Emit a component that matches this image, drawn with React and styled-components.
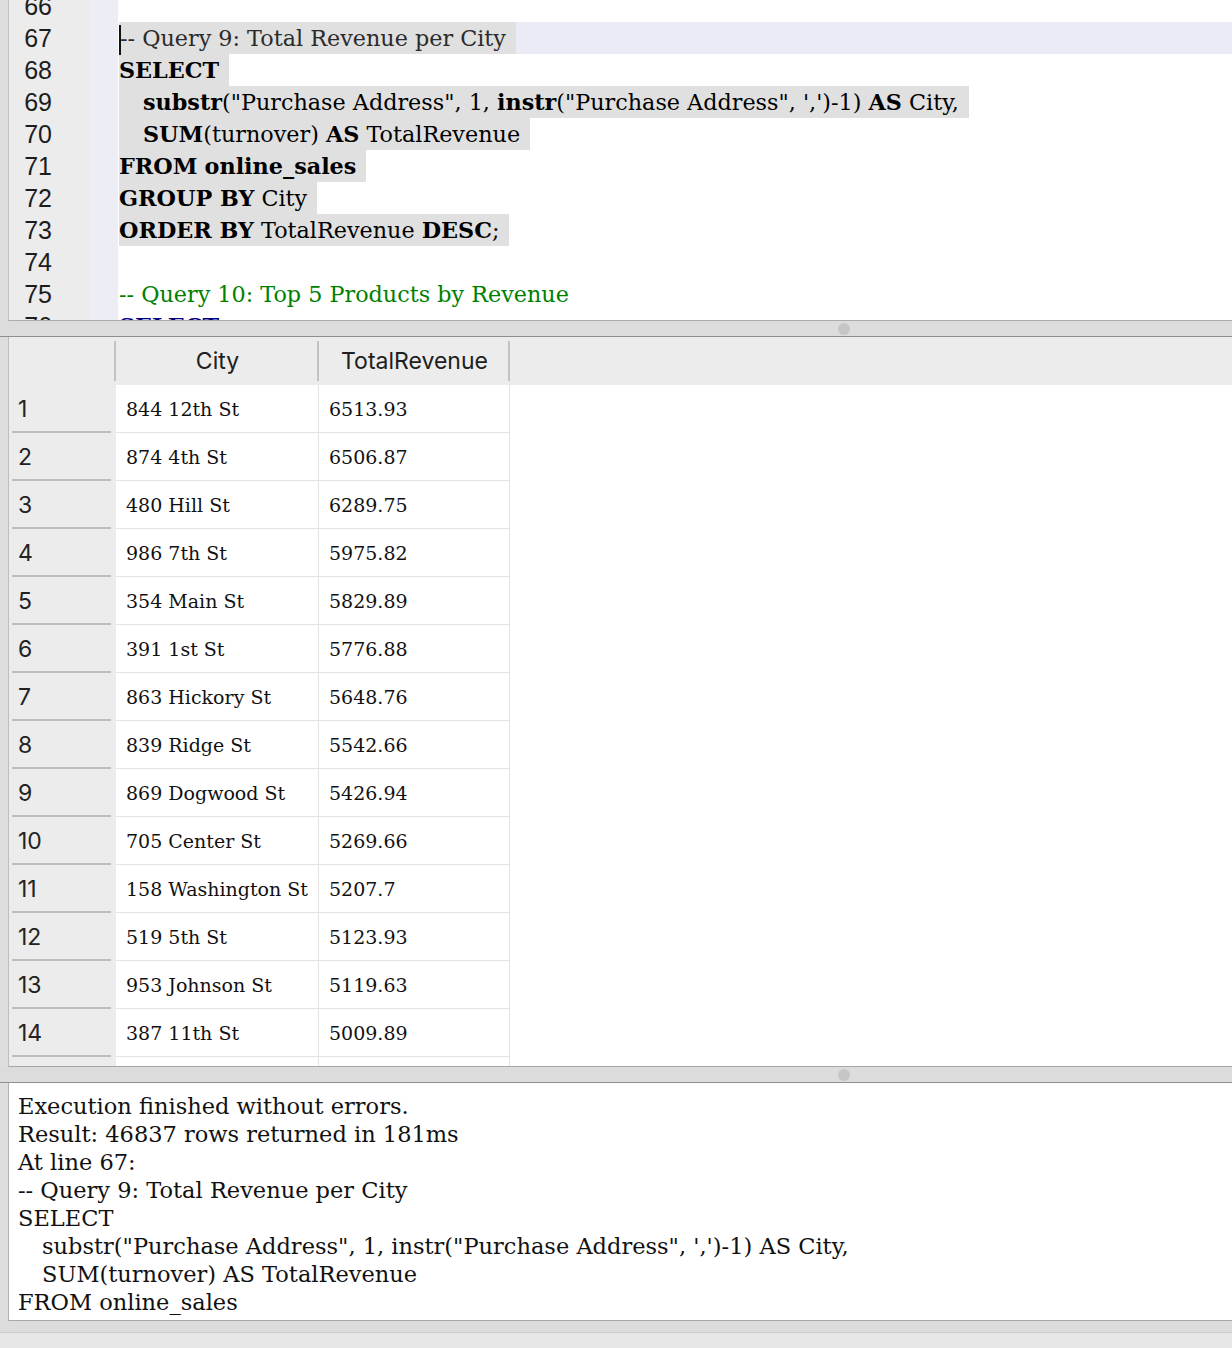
import React from "react";
import styled, { createGlobalStyle } from "styled-components";

const GlobalStyle = createGlobalStyle`
  html, body {
    margin: 0;
    padding: 0;
    background: #dedede;
  }
  * {
    box-sizing: border-box;
  }
`;

const codeFont = `"DejaVu Serif", "Liberation Serif", serif`;
const uiFont = `Inter, "Liberation Sans", sans-serif`;

const Window = styled.div`
  width: 1232px;
  height: 1348px;
  display: flex;
  flex-direction: column;
  overflow: hidden;
  background: #dedede;
`;

/* ---------- editor ---------- */

const EditorPanel = styled.div`
  height: 321px;
  margin-left: 8px;
  display: flex;
  background: #fff;
  border-left: 1px solid #c2c2c2;
  border-bottom: 1px solid #ababab;
  overflow: hidden;
`;

const Gutter = styled.div`
  width: 81px;
  flex: none;
  background: #ececec;
  padding-right: 38px;
  text-align: right;
  font-family: "Liberation Sans", Arial, sans-serif;
  font-size: 25px;
  color: #1c1c1c;
`;

const Scroll = styled.div`
  margin-top: -10px;
`;

const LineNo = styled.div`
  height: 32px;
  line-height: 32px;
`;

const FoldMargin = styled.div`
  width: 28px;
  flex: none;
  background: #ededf6;
`;

const Code = styled.div`
  flex: 1;
  font-family: ${codeFont};
  font-size: 22.3px;
  color: #000;
  padding-left: 1px;
`;

const Line = styled.div`
  height: 32px;
  line-height: 32px;
  white-space: pre;
  background: ${(p) => (p.$current ? "#ebebf5" : "transparent")};
`;

const Selected = styled.span`
  display: inline-block;
  height: 32px;
  padding-right: 10px;
  background: #e0e0e0;
`;

const Indent = styled.span`
  display: inline-block;
  width: 24px;
`;

const Cursor = styled.span`
  position: relative;
  z-index: 1;
  display: inline-block;
  width: 2px;
  height: 30px;
  margin-right: -1px;
  vertical-align: middle;
  background: #111;
`;

const Kw = styled.b`
  font-weight: 700;
  color: ${(p) => (p.$sel ? "#000" : "#00007f")};
`;

const Comment = styled.span`
  color: ${(p) => (p.$sel ? "#2b2b2b" : "#008000")};
`;

/* ---------- splitter ---------- */

const Splitter = styled.div`
  height: 16px;
  flex: none;
  background: #dcdcdc;
  border-bottom: 1px solid #8f8f8f;
  display: flex;
  align-items: center;
  padding-left: 838px;
`;

const Handle = styled.span`
  width: 12px;
  height: 12px;
  border-radius: 50%;
  background: #c6c6c6;
`;

/* ---------- results table ---------- */

const TablePanel = styled.div`
  height: 730px;
  flex: none;
  margin-left: 8px;
  background: #fff;
  border-left: 1px solid #bdbdbd;
  border-bottom: 1px solid #a6a6a6;
  overflow: hidden;
`;

const Row = styled.div`
  display: grid;
  grid-template-columns: 107px 203px 191px 1fr;
  height: 48px;
  background: ${(p) => (p.$header ? "#ececec" : "#fff")};
`;

const HeaderCell = styled.div`
  position: relative;
  display: flex;
  align-items: center;
  justify-content: center;
  font-family: ${uiFont};
  font-size: 23px;
  color: #202020;
  &::after {
    content: "";
    position: absolute;
    right: 0;
    top: 4px;
    bottom: 4px;
    width: 2px;
    background: #c2c2c2;
  }
`;

const RowHead = styled.div`
  position: relative;
  display: flex;
  align-items: center;
  padding-left: 9px;
  background: #ececec;
  font-family: ${uiFont};
  font-size: 23px;
  color: #222;
  &::after {
    content: "";
    position: absolute;
    left: 3px;
    right: 5px;
    bottom: 0;
    height: 2px;
    background: #bcbcbc;
  }
`;

const Cell = styled.div`
  display: flex;
  align-items: center;
  padding-left: 10px;
  border-right: 1px solid #e3e3e3;
  border-bottom: 1px solid #e3e3e3;
  font-family: ${codeFont};
  font-size: 19px;
  color: #111;
  white-space: nowrap;
`;

/* ---------- messages ---------- */

const MessagePanel = styled.div`
  height: 238px;
  flex: none;
  margin-left: 8px;
  padding: 9px 9px;
  background: #fff;
  border-left: 1px solid #b0b0b0;
  border-bottom: 1px solid #a8a8a8;
  font-family: ${codeFont};
  font-size: 22.5px;
  line-height: 28px;
  color: #111;
  overflow: hidden;
`;

const Msg = styled.div`
  white-space: pre;
  padding-left: ${(p) => (p.$indent ? "24px" : "0")};
`;

const Footer = styled.div`
  flex: 1;
  background: #e7e7e7;
  border-top: 11px solid #dcdcdc;
  box-shadow: inset 0 1px 0 #cdcdcd;
`;

const rows = [
  ["844 12th St", "6513.93"],
  ["874 4th St", "6506.87"],
  ["480 Hill St", "6289.75"],
  ["986 7th St", "5975.82"],
  ["354 Main St", "5829.89"],
  ["391 1st St", "5776.88"],
  ["863 Hickory St", "5648.76"],
  ["839 Ridge St", "5542.66"],
  ["869 Dogwood St", "5426.94"],
  ["705 Center St", "5269.66"],
  ["158 Washington St", "5207.7"],
  ["519 5th St", "5123.93"],
  ["953 Johnson St", "5119.63"],
  ["387 11th St", "5009.89"],
  ["", ""],
];

const lineNumbers = [66, 67, 68, 69, 70, 71, 72, 73, 74, 75, 76];

const messages = [
  "Execution finished without errors.",
  "Result: 46837 rows returned in 181ms",
  "At line 67:",
  "-- Query 9: Total Revenue per City",
  "SELECT",
  { indent: true, text: `substr("Purchase Address", 1, instr("Purchase Address", ',')-1) AS City,` },
  { indent: true, text: "SUM(turnover) AS TotalRevenue" },
  "FROM online_sales",
];

export default function App() {
  return (
    <>
      <GlobalStyle />
      <Window>
        <EditorPanel>
          <Gutter>
            <Scroll>
              {lineNumbers.map((n) => (
                <LineNo key={n}>{n}</LineNo>
              ))}
            </Scroll>
          </Gutter>
          <FoldMargin />
          <Code>
            <Scroll>
              <Line />
              <Line $current>
                <Cursor />
                <Selected>
                  <Comment $sel>-- Query 9: Total Revenue per City</Comment>
                </Selected>
              </Line>
              <Line>
                <Selected>
                  <Kw $sel>SELECT</Kw>
                </Selected>
              </Line>
              <Line>
                <Selected>
                  <Indent />
                  <Kw $sel>substr</Kw>("Purchase Address", 1, <Kw $sel>instr</Kw>("Purchase Address", ',')-1) <Kw $sel>AS</Kw> City,
                </Selected>
              </Line>
              <Line>
                <Selected>
                  <Indent />
                  <Kw $sel>SUM</Kw>(turnover) <Kw $sel>AS</Kw> TotalRevenue
                </Selected>
              </Line>
              <Line>
                <Selected>
                  <Kw $sel>FROM</Kw> <Kw $sel>online_sales</Kw>
                </Selected>
              </Line>
              <Line>
                <Selected>
                  <Kw $sel>GROUP BY</Kw> City
                </Selected>
              </Line>
              <Line>
                <Selected>
                  <Kw $sel>ORDER BY</Kw> TotalRevenue <Kw $sel>DESC</Kw>;
                </Selected>
              </Line>
              <Line />
              <Line>
                <Comment>-- Query 10: Top 5 Products by Revenue</Comment>
              </Line>
              <Line>
                <Kw>SELECT</Kw>
              </Line>
            </Scroll>
          </Code>
        </EditorPanel>

        <Splitter>
          <Handle />
        </Splitter>

        <TablePanel>
          <Row $header>
            <HeaderCell />
            <HeaderCell>City</HeaderCell>
            <HeaderCell>TotalRevenue</HeaderCell>
            <div />
          </Row>
          {rows.map(([city, total], i) => (
            <Row key={i}>
              <RowHead>{i + 1}</RowHead>
              <Cell>{city}</Cell>
              <Cell>{total}</Cell>
              <div />
            </Row>
          ))}
        </TablePanel>

        <Splitter>
          <Handle />
        </Splitter>

        <MessagePanel>
          {messages.map((m, i) =>
            typeof m === "string" ? (
              <Msg key={i}>{m}</Msg>
            ) : (
              <Msg key={i} $indent>
                {m.text}
              </Msg>
            )
          )}
        </MessagePanel>

        <Footer />
      </Window>
    </>
  );
}
